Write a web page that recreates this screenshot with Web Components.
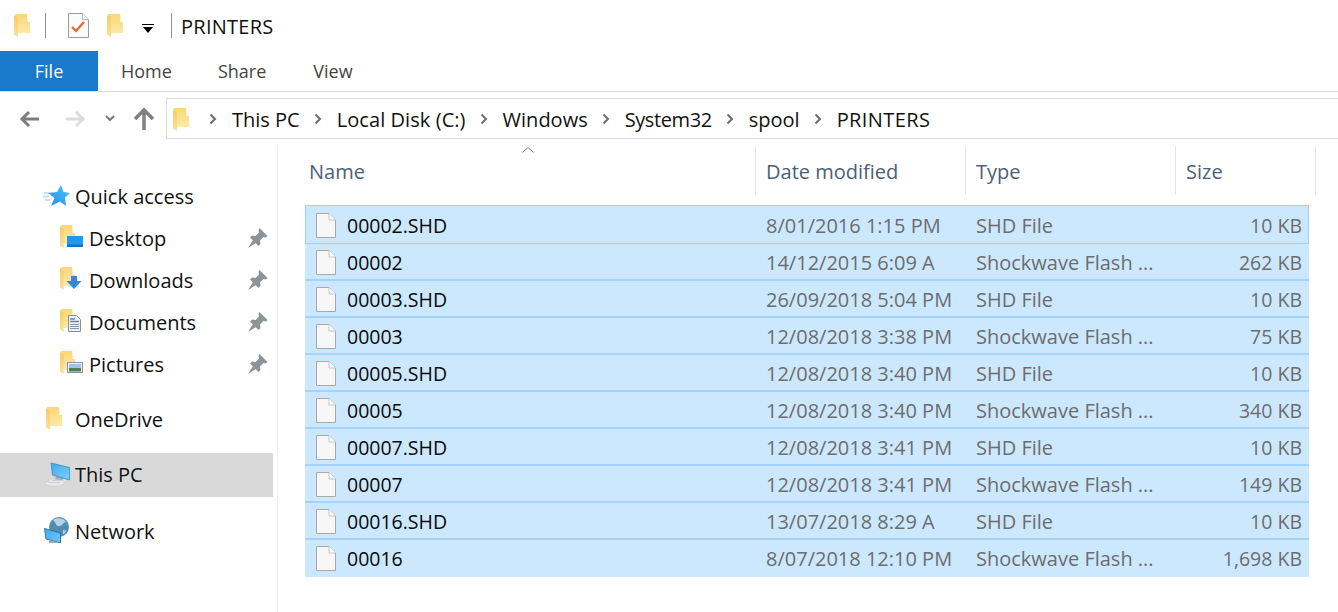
<!DOCTYPE html>
<html>
<head>
<meta charset="utf-8">
<title>PRINTERS</title>
<style>
    html, body { margin: 0; padding: 0; background: #fff; overflow: hidden; }
    body { font-family: "Open Sans", "Noto Sans", sans-serif; font-size: 20px; color: #000; width: 1338px; height: 612px; }
</style>
</head>
<body>
<explorer-titlebar title-text="PRINTERS"></explorer-titlebar>
<explorer-ribbon></explorer-ribbon>
<explorer-address path="This PC|Local Disk (C:)|Windows|System32|spool|PRINTERS"></explorer-address>
<div id="main" style="display:flex;height:466px">
    <explorer-nav>
        <nav-item icon="star" h="42" top="30">Quick access</nav-item>
        <nav-item icon="desktop" h="42" indent pin>Desktop</nav-item>
        <nav-item icon="downloads" h="42" indent pin>Downloads</nav-item>
        <nav-item icon="documents" h="42" indent pin>Documents</nav-item>
        <nav-item icon="pictures" h="42" indent pin>Pictures</nav-item>
        <nav-item icon="navfolder" h="42" top="13">OneDrive</nav-item>
        <nav-item icon="pc" h="44" top="12" selected>This PC</nav-item>
        <nav-item icon="network" h="44" top="13">Network</nav-item>
    </explorer-nav>
    <file-list>
        <file-row first name="00002.SHD" date="8/01/2016 1:15 PM" type="SHD File" size="10 KB"></file-row>
        <file-row name="00002" date="14/12/2015 6:09 A" type="Shockwave Flash ..." size="262 KB"></file-row>
        <file-row name="00003.SHD" date="26/09/2018 5:04 PM" type="SHD File" size="10 KB"></file-row>
        <file-row name="00003" date="12/08/2018 3:38 PM" type="Shockwave Flash ..." size="75 KB"></file-row>
        <file-row name="00005.SHD" date="12/08/2018 3:40 PM" type="SHD File" size="10 KB"></file-row>
        <file-row name="00005" date="12/08/2018 3:40 PM" type="Shockwave Flash ..." size="340 KB"></file-row>
        <file-row name="00007.SHD" date="12/08/2018 3:41 PM" type="SHD File" size="10 KB"></file-row>
        <file-row name="00007" date="12/08/2018 3:41 PM" type="Shockwave Flash ..." size="149 KB"></file-row>
        <file-row name="00016.SHD" date="13/07/2018 8:29 A" type="SHD File" size="10 KB"></file-row>
        <file-row last name="00016" date="8/07/2018 12:10 PM" type="Shockwave Flash ..." size="1,698 KB"></file-row>
    </file-list>
</div>

<script type="module">
    // folder drawn in a 16x23 box, x/w let the overlay icons place a narrower one
    const folder = (x = 0, w = 16) => `<svg x="${x}" y="0" width="${w}" height="23" viewBox="0 0 16 23" preserveAspectRatio="none">
        <defs>
            <linearGradient id="fb" x1="0" y1="0" x2="0" y2="1"><stop offset="0" stop-color="#f9d777"/><stop offset="1" stop-color="#fee9a8"/></linearGradient>
            <linearGradient id="fl" x1="0" y1="0" x2="0" y2="1"><stop offset="0" stop-color="#f6cd68"/><stop offset="1" stop-color="#fbe096"/></linearGradient>
        </defs>
        <path d="M1 0h12l.5 8H16v11H4z" fill="url(#fb)"/>
        <path d="M0 1l4 2.500V23l-4-2.500z" fill="url(#fl)"/></svg>`;
    const ICONS = {
        folder: `<svg width="16" height="23" viewBox="0 0 16 23">${folder()}</svg>`,
        navfolder: `<svg style="margin-left:3px" width="16" height="23" viewBox="0 0 16 23">${folder()}</svg>`,
        star: `<svg width="27" height="21" viewBox="0 0 27 21"><defs><linearGradient id="s" x1="0" y1="1" x2="1" y2="0"><stop offset="0" stop-color="#1c8fee"/><stop offset="1" stop-color="#58bdfc"/></linearGradient></defs><path d="M1 8h5M0 11.500h6M2 15h5" stroke="#a6d8f8" stroke-width="1.300"/><path d="M18 0l2.500 7L27 8l-5 4.500L23 21l-6-4.500L8 21l3.500-8L5 8l9-1z" fill="url(#s)"/></svg>`,
        desktop: `<svg width="25" height="24" viewBox="0 0 25 24">${folder(1, 15)}<rect x="8" y="11" width="16" height="11" fill="#1e9af0"/><rect x="8" y="19.500" width="16" height="2.500" fill="#0f74c8"/></svg>`,
        downloads: `<svg width="25" height="24" viewBox="0 0 25 24">${folder(1, 15)}<path d="M12 9h6v5h4.500L15 22l-7.500-8H12z" fill="#2f88d8"/></svg>`,
        documents: `<svg width="25" height="24" viewBox="0 0 25 24">${folder(1, 15)}<path d="M9.500 6.500h8l4 4v12h-12z" fill="#eef1f3" stroke="#8a8f94"/><path d="M11 10h5M11 12.500h9" stroke="#4a90c8" stroke-width="1.500"/><path d="M11 15.500h9M11 17.500h9M11 19.500h9" stroke="#8a9aa8"/></svg>`,
        pictures: `<svg width="25" height="24" viewBox="0 0 25 24">${folder(1, 15)}<rect x="8.500" y="11.500" width="15" height="10" fill="#f2f3f4" stroke="#8f9396"/><rect x="10" y="13" width="12" height="4" fill="#9cc6e2"/><rect x="10" y="17" width="12" height="3.500" fill="#4f7f5a"/></svg>`,
        pc: `<svg width="29" height="27" viewBox="0 0 29 27"><defs><linearGradient id="p" x1="0" y1="0" x2="1" y2="1"><stop offset="0" stop-color="#3fa9ef"/><stop offset="1" stop-color="#7ed0fb"/></linearGradient></defs><path d="M1 24l7.500-5h16l-6.500 7H7z" fill="#e6e8ea" stroke="#c6c9cb" stroke-width=".6"/><path d="M5 22.500h12M9 20.500h12" stroke="#cfd2d4"/><path d="M13 16l7 1v3l-8-.5z" fill="#a8adb0"/><path d="M8 3l18.500 4.500V20L9.500 15z" fill="url(#p)" stroke="#3a8abf" stroke-width=".8"/></svg>`,
        network: `<svg width="26" height="26" viewBox="0 0 26 26"><defs><linearGradient id="n" x1="0" y1="0" x2="1" y2="1"><stop offset="0" stop-color="#3fa9ef"/><stop offset="1" stop-color="#6cc8fb"/></linearGradient></defs><circle cx="16" cy="10" r="10" fill="#4f8db5"/><path d="M10 3c4-3 11-2 13 2-3 0-3 4-7 4-3 1-3-4-6-6zM20 13c2 0 3 1 3 1-1 2-2 3-3 3z" fill="#b9d3e3"/><path d="M1.500 11.500l16 4.500v10l-14.500-4z" fill="url(#n)" stroke="#27709f" stroke-width=".9"/><path d="M6 23l9 2.500v.5H6z" fill="#a4aaae"/></svg>`,
        pin: `<svg width="20" height="20" viewBox="0 0 20 20"><path d="M11.500 0l8 8L18 9.500 15.500 9 12 12.500l.5 3.500-2 2L2 9.500l2-2 3.500.5L11 4.500 10.500 2z" fill="#8d9499"/><path d="M5 12l3 3-8 5z" fill="#8d9499"/></svg>`,
        file: `<svg width="20" height="25" viewBox="0 0 20 25"><path d="M.5.5h12.500l6.500 6.500v17.500H.5z" fill="#f7f7f7" stroke="#a8a8a8"/><path d="M13 .5v6.500h6.500" fill="#fff" stroke="#c4c4c4"/></svg>`,
        check: `<svg width="21" height="25" viewBox="0 0 21 25"><path d="M.5.5h14l6 6v18H.5z" fill="#fbfbfb" stroke="#9b9b9b"/><path d="M14.500.5v6h6" fill="#fff" stroke="#bbb"/><path d="M4 14l4 4 8-9" fill="none" stroke="#e8622c" stroke-width="2.200"/></svg>`
    };

    class ExplorerIcon extends HTMLElement {
        constructor() {
            super();
            this.attachShadow({mode: 'open'});
        }
        connectedCallback() {
            this.shadowRoot.innerHTML = `<style>:host{display:inline-flex;line-height:0;flex:none}</style>${ICONS[this.getAttribute('name')] || ''}`;
        }
    }
    customElements.define('explorer-icon', ExplorerIcon);

    class ExplorerTitlebar extends HTMLElement {
        constructor() {
            super();
            this.attachShadow({mode: 'open'});
        }
        connectedCallback() {
            this.shadowRoot.innerHTML = `
            <style>
                :host { display: flex; align-items: center; height: 51px; padding-left: 14px; box-sizing: border-box; }
                .sep { width: 1px; height: 25px; background: #8f8f8f; }
                .title { font-size: 20px; letter-spacing: .25px; margin-left: 9px; margin-top: 1px; color: #111; }
                .arrow { display: flex; flex-direction: column; align-items: center; gap: 2px; width: 12px; margin: 6px 17px 0 19px; }
                .arrow i { display: block; }
                .bar { width: 12px; height: 1px; background: #000; }
                .tri { width: 0; height: 0; border: 5px solid transparent; border-top: 6px solid #000; border-bottom: 0; }
            </style>
            <explorer-icon name="folder" style="margin-right:15px"></explorer-icon>
            <div class="sep"></div>
            <explorer-icon name="check" style="margin:0 18px 0 22px"></explorer-icon>
            <explorer-icon name="folder"></explorer-icon>
            <div class="arrow"><i class="bar"></i><i class="tri"></i></div>
            <div class="sep"></div>
            <div class="title">${this.getAttribute('title-text')}</div>`;
        }
    }
    customElements.define('explorer-titlebar', ExplorerTitlebar);

    class ExplorerRibbon extends HTMLElement {
        constructor() {
            super();
            this.attachShadow({mode: 'open'});
            this.shadowRoot.innerHTML = `
            <style>
                :host { display: flex; height: 41px; box-sizing: border-box; border-bottom: 1px solid #dadbdc; font-size: 18px; color: #444; }
                .tab { display: flex; align-items: center; justify-content: center; height: 40px; box-sizing: border-box; padding: 0 23px; }
                .file { width: 98px; background: #1979ca; color: #fff; padding: 0; }
            </style>
            <div class="tab file">File</div>
            <div class="tab">Home</div>
            <div class="tab">Share</div>
            <div class="tab" style="margin-left:1px">View</div>`;
        }
    }
    customElements.define('explorer-ribbon', ExplorerRibbon);

    // crumbs whose width differs most from the original font
    const CRUMB_SPACING = {'Local Disk (C:)': '.07px', System32: '-.4px', PRINTERS: '.4px'};

    class ExplorerAddress extends HTMLElement {
        constructor() {
            super();
            this.attachShadow({mode: 'open'});
        }
        connectedCallback() {
            const crumbs = this.getAttribute('path').split('|').map(p => `
                <svg class="chev" width="8" height="12" viewBox="0 0 8 12"><path d="M1.500 1.500L6 6l-4.500 4.500" fill="none" stroke="#6d6d6d" stroke-width="2"/></svg>
                <span style="letter-spacing:${CRUMB_SPACING[p] || 0}">${p}</span>`).join('');
            this.shadowRoot.innerHTML = `
            <style>
                :host { display: flex; height: 54px; box-sizing: border-box; padding-top: 6px; }
                .nav { width: 166px; height: 41px; display: flex; align-items: center; flex: none; box-sizing: border-box; padding-left: 19px; }
                .box { flex: 1; height: 41px; box-sizing: border-box; border: 1px solid #d9d9d9; border-right: 0; display: flex; align-items: center; padding: 1px 0 0 6px; font-size: 20px; color: #111; }
                .chev { margin: 0 15px 0 14px; flex: none; }
                .box explorer-icon { margin-right: 6px; }
                svg { display: block; }
                span { white-space: nowrap; }
            </style>
            <div class="nav">
                <svg width="22" height="18" viewBox="0 0 22 18"><path d="M20 9H3M10 2L3 9l7 7" fill="none" stroke="#7d7d7d" stroke-width="3"/></svg>
                <svg style="margin-left:23px" width="22" height="18" viewBox="0 0 22 18"><path d="M2 9h17M12 2l7 7-7 7" fill="none" stroke="#dcdcdc" stroke-width="3"/></svg>
                <svg style="margin-left:19px" width="10" height="7" viewBox="0 0 10 7"><path d="M1 1l4 4 4-4" fill="none" stroke="#777" stroke-width="2"/></svg>
                <svg style="margin-left:18px" width="22" height="24" viewBox="0 0 22 24"><path d="M11 23V3M2 12l9-9 9 9" fill="none" stroke="#7f7f7f" stroke-width="3.500"/></svg>
            </div>
            <div class="box"><explorer-icon name="folder"></explorer-icon>${crumbs}</div>`;
        }
    }
    customElements.define('explorer-address', ExplorerAddress);

    class ExplorerNav extends HTMLElement {
        constructor() {
            super();
            this.attachShadow({mode: 'open'});
            this.shadowRoot.innerHTML = `
            <style>
                :host { display: block; width: 278px; flex: none; box-sizing: border-box; border-right: 1px solid #f0f0f0; padding-right: 4px; }
            </style>
            <slot></slot>`;
        }
    }
    customElements.define('explorer-nav', ExplorerNav);

    class NavItem extends HTMLElement {
        constructor() {
            super();
            this.attachShadow({mode: 'open'});
        }
        connectedCallback() {
            const indent = this.hasAttribute('indent');
            const pin = this.hasAttribute('pin') ? '<explorer-icon class="pin" name="pin"></explorer-icon>' : '';
            this.shadowRoot.innerHTML = `
            <style>
                :host { display: flex; align-items: center; box-sizing: border-box; padding-bottom: 2px; height: ${this.getAttribute('h')}px; margin-top: ${this.getAttribute('top') || 0}px; color: #111; white-space: nowrap; }
                :host([selected]) { background: #d9d9d9; }
                .ic { width: ${indent ? 30 : 32}px; margin-left: ${indent ? 59 : 43}px; margin-bottom: 2px; display: flex; }
                .pin { margin-left: auto; margin-right: 5px; }
            </style>
            <div class="ic"><explorer-icon name="${this.getAttribute('icon')}"></explorer-icon></div>
            <slot></slot>${pin}`;
        }
    }
    customElements.define('nav-item', NavItem);

    class FileList extends HTMLElement {
        constructor() {
            super();
            this.attachShadow({mode: 'open'});
            this.shadowRoot.innerHTML = `
            <style>
                :host { display: block; flex: 1; padding-left: 27px; position: relative; }
                .head { display: grid; grid-template-columns: 451px 210px 210px 140px; height: 49px; width: 1011px; color: #4c607a; font-size: 20px; margin-bottom: 10px; }
                .head div { display: flex; align-items: center; padding: 2px 0 0 4px; box-sizing: border-box; border-right: 1px solid #e5e5e5; height: 49px; }
                .sort { position: absolute; left: 244px; top: 1px; }
                .rows { width: 1004px; }
            </style>
            <svg class="sort" width="12" height="6" viewBox="0 0 12 6"><path d="M.5 5.500L6 .5l5.500 5" fill="none" stroke="#777"/></svg>
            <div class="head"><div>Name</div><div style="padding-left:10px">Date modified</div><div style="padding-left:10px">Type</div><div style="padding-left:10px">Size</div></div>
            <div class="rows"><slot></slot></div>`;
        }
    }
    customElements.define('file-list', FileList);

    class FileRow extends HTMLElement {
        constructor() {
            super();
            this.attachShadow({mode: 'open'});
        }
        connectedCallback() {
            const a = n => this.getAttribute(n);
            this.shadowRoot.innerHTML = `
            <style>
                :host { display: grid; grid-template-columns: 450px 210px 200px 144px; height: 37px; padding-top: 1px; box-sizing: border-box; background: #cce8ff; border-bottom: 2px solid #a3d3fb; align-items: center; white-space: nowrap; color: #6d6d6d; font-size: 20px; }
                :host([first]) { grid-template-columns: 449px 210px 200px 143px; border: 1px solid #99d1ff; height: 39px; padding-top: 2px; }
                :host([last]) { border-bottom-color: transparent; }
                .name { display: flex; align-items: center; color: #0a0a0a; padding-left: 11px; gap: 11px; font-size: 19.500px; }
                :host([first]) .name { padding-left: 10px; }
                .date, .type { padding-left: 11px; }
                .size { text-align: right; padding-right: 7px; font-size: 19.500px; }
                :host([first]) .size { padding-right: 6px; }
            </style>
            <div class="name"><explorer-icon name="file"></explorer-icon><span>${a('name')}</span></div>
            <div class="date">${a('date')}</div>
            <div class="type">${a('type')}</div>
            <div class="size">${a('size')}</div>`;
        }
    }
    customElements.define('file-row', FileRow);
</script>
</body>
</html>
